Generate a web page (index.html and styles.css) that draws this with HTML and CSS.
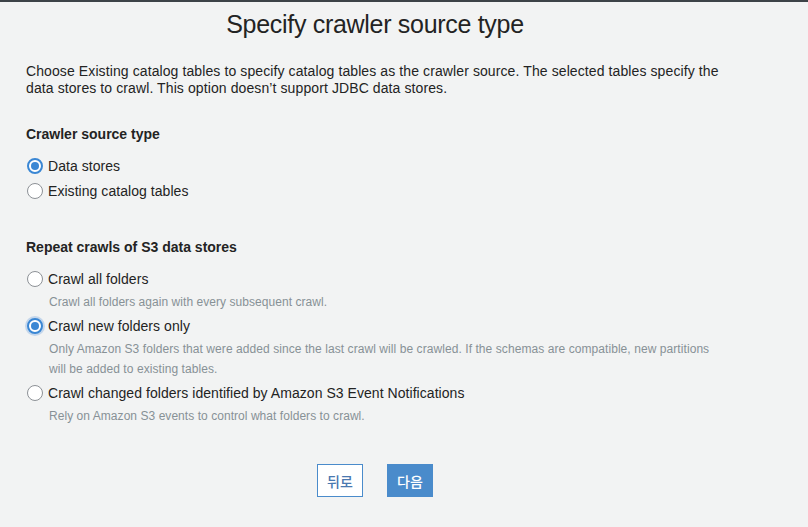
FILE: index.html
```html
<!DOCTYPE html>
<html lang="ko">
<head>
<meta charset="utf-8">
<title>Specify crawler source type</title>
<link rel="stylesheet" href="styles.css">
</head>
<body>
<div class="topbar"></div>
<main class="page">
  <h1 class="title">Specify crawler source type</h1>
  <p class="intro">Choose Existing catalog tables to specify catalog tables as the crawler source. The selected tables specify the data stores to crawl. This option doesn’t support JDBC data stores.</p>

  <section class="group group-source">
    <h2 class="group-title">Crawler source type</h2>
    <label class="option">
      <span class="radio checked"></span>
      <span class="option-label">Data stores</span>
    </label>
    <label class="option">
      <span class="radio"></span>
      <span class="option-label">Existing catalog tables</span>
    </label>
  </section>

  <section class="group group-repeat">
    <h2 class="group-title">Repeat crawls of S3 data stores</h2>
    <div class="choice">
      <label class="option">
        <span class="radio"></span>
        <span class="option-label">Crawl all folders</span>
      </label>
      <p class="hint">Crawl all folders again with every subsequent crawl.</p>
    </div>
    <div class="choice">
      <label class="option">
        <span class="radio checked focus"></span>
        <span class="option-label">Crawl new folders only</span>
      </label>
      <p class="hint hint-wide">Only Amazon S3 folders that were added since the last crawl will be crawled. If the schemas are compatible, new partitions will be added to existing tables.</p>
    </div>
    <div class="choice">
      <label class="option">
        <span class="radio"></span>
        <span class="option-label">Crawl changed folders identified by Amazon S3 Event Notifications</span>
      </label>
      <p class="hint">Rely on Amazon S3 events to control what folders to crawl.</p>
    </div>
  </section>

  <div class="actions">
    <button class="btn btn-back" type="button">뒤로</button>
    <button class="btn btn-next" type="button">다음</button>
  </div>
</main>
</body>
</html>
```

FILE: styles.css
```css
* { box-sizing: border-box; }
html, body {
  margin: 0;
  padding: 0;
  background: #f2f3f3;
}
body {
  font-family: "Liberation Sans", Arial, "Noto Sans CJK KR", sans-serif;
  color: #16191f;
  width: 808px;
  height: 527px;
  overflow: hidden;
}
.topbar {
  height: 2px;
  background: #3d4347;
}
.page {
  width: 724px;
  padding-left: 26px;
}
.title {
  margin: 8px 0 0;
  font-size: 25px;
  font-weight: normal;
  line-height: 28px;
  text-align: center;
  color: #232323;
  letter-spacing: -0.3px;
}
.intro {
  margin: 25px 0 0;
  font-size: 14px;
  line-height: 17px;
  color: #232323;
  letter-spacing: 0.1px;
}
.group { margin: 0; }
.group-source { margin-top: 28px; }
.group-repeat { margin-top: 35px; }
.group-title {
  margin: 0 0 10px;
  font-size: 14px;
  font-weight: bold;
  line-height: 18px;
  color: #232323;
}
.option {
  display: flex;
  align-items: center;
  gap: 5px;
  height: 25px;
  margin-left: 1px;
}
.option-label {
  font-size: 14px;
  color: #232323;
  letter-spacing: 0.05px;
}
.radio {
  width: 16px;
  height: 16px;
  border-radius: 50%;
  border: 1px solid #8d9196;
  background: #fff;
  flex: none;
  display: inline-block;
  position: relative;
}
.radio.checked {
  border: 2px solid #3a87d4;
}
.radio.checked::after {
  content: "";
  position: absolute;
  left: 2px;
  top: 2px;
  width: 8px;
  height: 8px;
  border-radius: 50%;
  background: #3a87d4;
}
.radio.focus {
  box-shadow: 0 0 0 2px rgba(90, 150, 220, 0.3);
}
.hint {
  margin: 1px 0 0 23px;
  max-width: 670px;
  font-size: 12px;
  line-height: 20px;
  color: #879196;
  padding-bottom: 1px;
  letter-spacing: 0.05px;
}
.hint-wide { letter-spacing: 0.07px; }
.actions {
  display: flex;
  justify-content: center;
  gap: 24px;
  margin-top: 37px;
}
.btn {
  height: 33px;
  width: 46px;
  font-family: "Noto Sans CJK KR", sans-serif;
  font-size: 14px;
  font-weight: 500;
  padding: 0;
  cursor: pointer;
}
.btn-back {
  background: #fff;
  border: 1px solid #4a8bcb;
  color: #4a78b0;
}
.btn-next {
  background: #4a8bcb;
  border: 1px solid #4a8bcb;
  color: #fff;
}
```
